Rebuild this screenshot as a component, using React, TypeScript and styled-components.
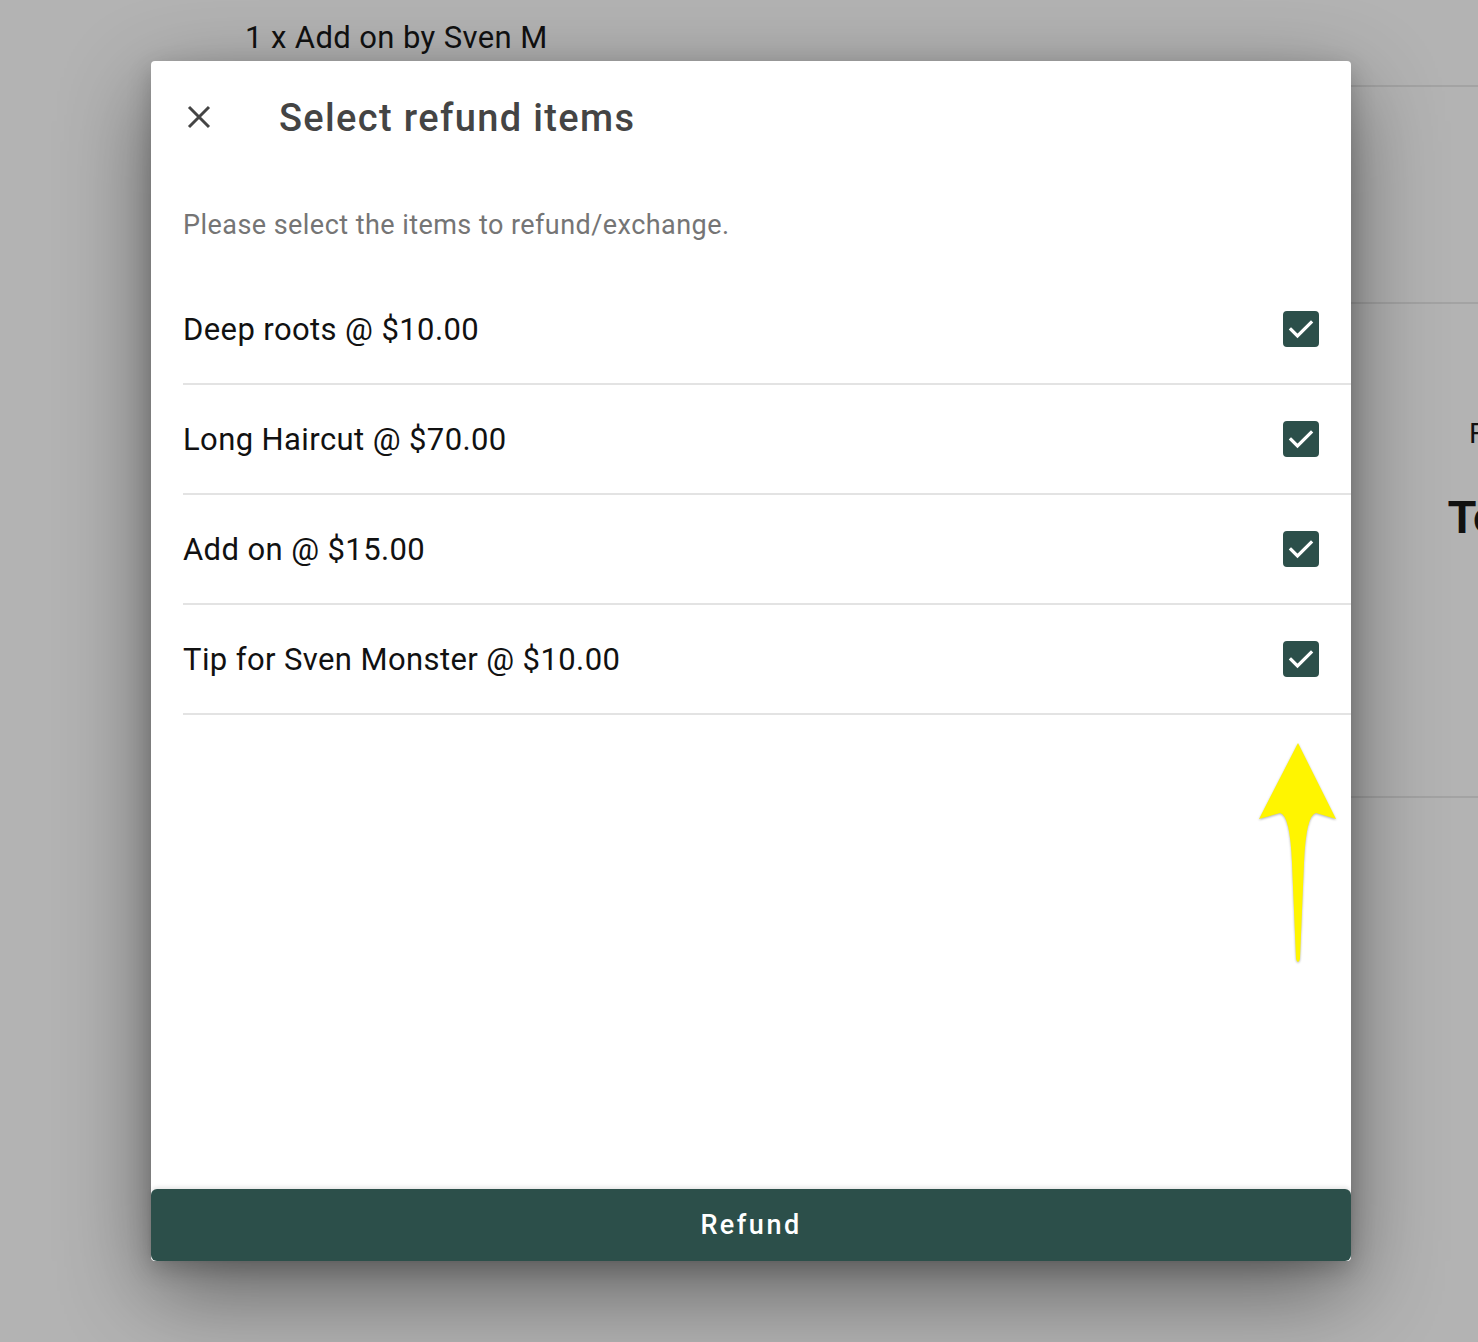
import React, {useState} from 'react';
import styled, {createGlobalStyle} from "styled-components";

const GlobalStyle = createGlobalStyle`
  html, body {
    margin: 0;
    padding: 0;
    background: #b3b3b3;
    font-family: Roboto, "Liberation Sans", sans-serif;
  }
`;

const Page = styled.div`
  position: relative;
  width: 1478px;
  height: 1342px;
  overflow: hidden;
  background: #b3b3b3;
  display: flex;
`;

const BgList = styled.div`
  width: 800px;
  flex-shrink: 0;
`;

const BgTitle = styled.div`
  padding: 18px 0 0 245px;
  font-size: 31px;
  letter-spacing: 0.4px;
  line-height: 40px;
  color: #111;
  white-space: nowrap;
`;

const BgPanel = styled.div`
  flex: 1;
  display: flex;
  flex-direction: column;
`;

const BgRow = styled.div<{ h: number }>`
  height: ${p => p.h}px;
  box-sizing: border-box;
  border-bottom: 2px solid #a3a3a3;
  display: flex;
  flex-direction: column;
  white-space: nowrap;
  font-family: "Liberation Sans", Arial, sans-serif;
  color: #111;
`;

const BgLabel = styled.div`
  padding: 114px 0 0 669px;
  font-size: 29px;
  line-height: 30px;
`;

const BgTotal = styled.div`
  margin-top: 44px;
  padding-left: 648px;
  font-size: 46px;
  font-weight: 700;
  line-height: 50px;
`;

const Modal = styled.div`
  position: absolute;
  left: 151px;
  top: 61px;
  width: 1200px;
  height: 1200px;
  background: #fff;
  border-radius: 4px;
  box-shadow: 0 30px 90px rgba(0, 0, 0, 0.45), 0 8px 24px rgba(0, 0, 0, 0.2);
  display: flex;
  flex-direction: column;
`;

const Header = styled.div`
  height: 112px;
  display: flex;
  align-items: center;
  padding-left: 24px;
`;

const CloseButton = styled.button`
  width: 48px;
  height: 48px;
  border: none;
  background: none;
  padding: 0;
  display: flex;
  align-items: center;
  justify-content: center;
  cursor: pointer;
`;

const Title = styled.h2`
  margin: 2px 0 0 56px;
  font-size: 38px;
  font-weight: 500;
  color: #444;
  letter-spacing: 1.35px;
`;

const Subtitle = styled.p`
  margin: 37px 0 35px 32px;
  font-size: 27px;
  letter-spacing: 0.45px;
  line-height: 30px;
  color: #757575;
`;

const Row = styled.label`
  height: 110px;
  box-sizing: border-box;
  margin-left: 32px;
  padding-right: 32px;
  border-bottom: 2px solid #e3e3e3;
  display: flex;
  align-items: center;
  justify-content: space-between;
  cursor: pointer;
`;

const ItemText = styled.span`
  font-size: 31px;
  letter-spacing: 0.4px;
  color: #111;
  padding-top: 1px;
`;

const Box = styled.span<{ checked: boolean }>`
  width: 36px;
  height: 36px;
  border-radius: 4px;
  box-sizing: border-box;
  background: ${p => p.checked ? '#2c4f4a' : '#fff'};
  border: 2px solid #2c4f4a;
  display: flex;
  align-items: center;
  justify-content: center;
`;

const Spacer = styled.div`
  flex: 1;
  position: relative;
`;

const Arrow = styled.svg`
  position: absolute;
  left: 1105px;
  top: 28px;
  filter: drop-shadow(0 1px 1px rgba(0, 0, 0, 0.3));
`;

const RefundButton = styled.button`
  height: 72px;
  border: none;
  border-radius: 6px;
  background: #2c4f4a;
  color: #fff;
  font-family: Roboto, "Liberation Sans", sans-serif;
  font-size: 27px;
  font-weight: 500;
  letter-spacing: 2.5px;
  box-shadow: 0 -2px 4px rgba(0, 0, 0, 0.1);
  cursor: pointer;
`;

const items = [
  'Deep roots @ $10.00',
  'Long Haircut @ $70.00',
  'Add on @ $15.00',
  'Tip for Sven Monster @ $10.00',
];

const App = () => {
  const [checked, setChecked] = useState(items.map(() => true));

  const toggle = (i: number) => {
    setChecked(checked.map((c, j) => j === i ? !c : c));
  };

  return (
    <Page>
      <GlobalStyle/>
      <BgList>
        <BgTitle>1 x Add on by Sven M</BgTitle>
      </BgList>
      <BgPanel>
        <BgRow h={87}/>
        <BgRow h={217}/>
        <BgRow h={494}>
          <BgLabel>Refund</BgLabel>
          <BgTotal>Total</BgTotal>
        </BgRow>
      </BgPanel>

      <Modal>
        <Header>
          <CloseButton aria-label="close">
            <svg width="24" height="24" viewBox="0 0 24 24">
              <path d="M2 2 L22 22 M22 2 L2 22" stroke="#444" strokeWidth="3" fill="none"/>
            </svg>
          </CloseButton>
          <Title>Select refund items</Title>
        </Header>
        <Subtitle>Please select the items to refund/exchange.</Subtitle>
        {items.map((item, i) => (
          <Row key={item} onClick={() => toggle(i)}>
            <ItemText>{item}</ItemText>
            <Box checked={checked[i]}>
              {checked[i] && (
                <svg width="28" height="28" viewBox="0 0 28 28">
                  <path d="M4 14.5 L10.5 21 L24 7.5" stroke="#fff" strokeWidth="3.2" fill="none" strokeLinecap="square"/>
                </svg>
              )}
            </Box>
          </Row>
        ))}
        <Spacer>
          <Arrow width="84" height="228" viewBox="0 0 84 228">
            <path
              d="M42 0 L80 76 L60 70 Q50 72 48 120 L44 216 Q42 222 40 216 L36 120 Q34 72 24 70 L3 76 Z"
              fill="#fff500"
            />
          </Arrow>
        </Spacer>
        <RefundButton>Refund</RefundButton>
      </Modal>
    </Page>
  );
};

export default App;
